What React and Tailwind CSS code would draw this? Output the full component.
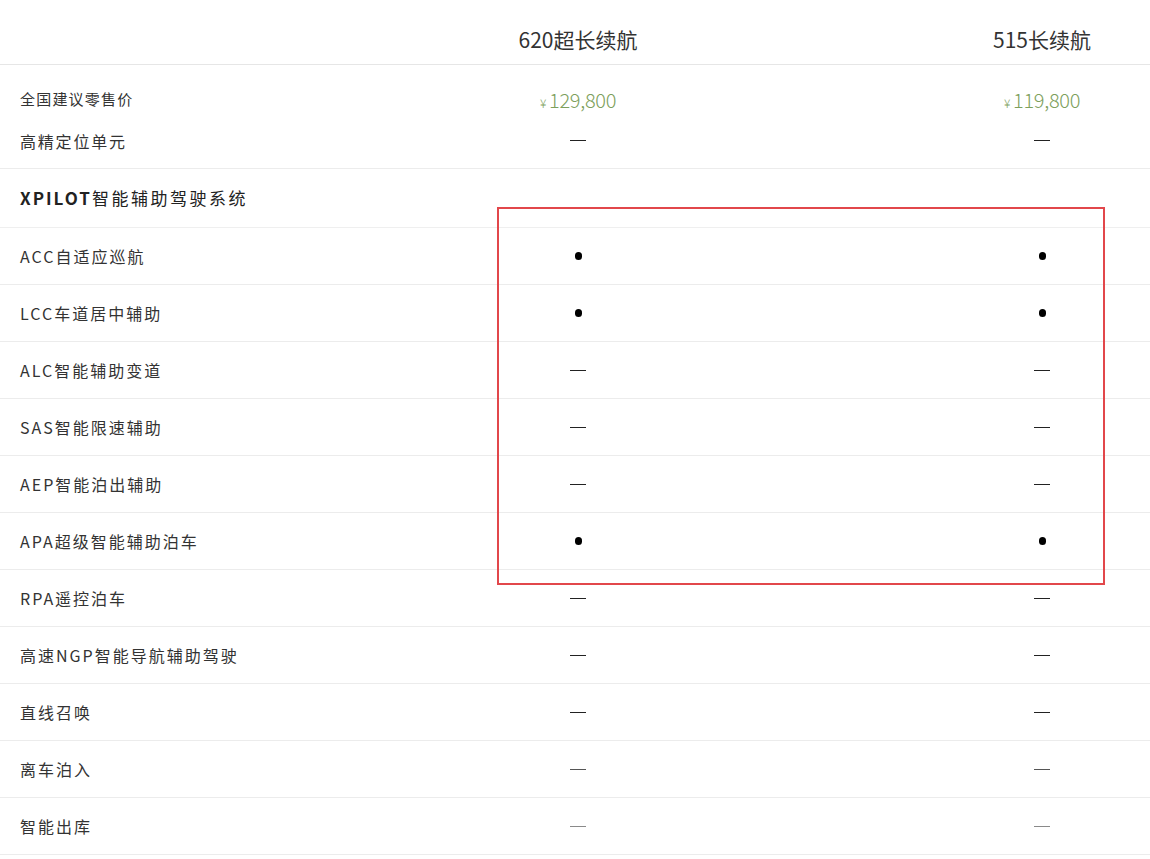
import React from "react";

const font = { fontFamily: '"Noto Sans CJK SC", "Noto Sans", sans-serif' };

const features = [
    { name: "ACC自适应巡航", a: "dot", b: "dot" },
    { name: "LCC车道居中辅助", a: "dot", b: "dot" },
    { name: "ALC智能辅助变道", a: "dash", b: "dash" },
    { name: "SAS智能限速辅助", a: "dash", b: "dash" },
    { name: "AEP智能泊出辅助", a: "dash", b: "dash" },
    { name: "APA超级智能辅助泊车", a: "dot", b: "dot" },
    { name: "RPA遥控泊车", a: "dash", b: "dash" },
    { name: "高速NGP智能导航辅助驾驶", a: "dash", b: "dash" },
    { name: "直线召唤", a: "dash", b: "dash" },
    { name: "离车泊入", a: "dash", b: "dash", tone: "light" },
    { name: "智能出库", a: "dash", b: "dash", tone: "lighter" },
];

function Mark({ type, tone }) {
    if (type === "dot") {
        return <div className="w-[7px] h-[8px] rounded-full bg-black" />;
    }
    const color =
        tone === "lighter"
            ? "bg-[#8a8a8a]"
            : tone === "light"
            ? "bg-[#555]"
            : "bg-[#222]";
    return <div className={`w-[16px] h-px ${color}`} />;
}

function Price({ value }) {
    return (
        <span className="text-[#7d9f5c] text-[20px] leading-none font-light tracking-[-0.3px]">
            <span className="text-[12px] mr-[3px]">¥</span>
            {value}
        </span>
    );
}

export default function App() {
    return (
        <div className="w-[1150px] h-[859px] bg-white relative" style={font}>
            {/* header */}
            <div className="grid grid-cols-[222px_712px_216px] h-[65px] border-b border-[#e6e6e6] items-center text-[21px] text-[#333]">
                <div />
                <div className="text-center pt-[16px]">620超长续航</div>
                <div className="text-center pt-[16px]">515长续航</div>
            </div>

            {/* price block */}
            <div className="pt-[14px] pb-[7px] border-b border-[#ececec]">
                <div className="grid grid-cols-[222px_712px_216px] h-[41px] items-center">
                    <div className="pl-5 text-[15px] tracking-[1.2px] text-[#333]">全国建议零售价</div>
                    <div className="flex justify-center"><Price value="129,800" /></div>
                    <div className="flex justify-center"><Price value="119,800" /></div>
                </div>
                <div className="grid grid-cols-[222px_712px_216px] h-[41px] items-center">
                    <div className="pl-5 text-[16px] tracking-[1.8px] text-[#333]">高精定位单元</div>
                    <div className="flex justify-center"><Mark type="dash" /></div>
                    <div className="flex justify-center"><Mark type="dash" /></div>
                </div>
            </div>

            {/* section title */}
            <div className="h-[59px] flex items-center pl-5 border-b border-[#efefef] text-[17px] text-[#222]">
                <span className="font-bold tracking-[2px]">XPILOT</span>
                <span className="tracking-[2.5px]">智能辅助驾驶系统</span>
            </div>

            {/* feature rows */}
            {features.map((f) => (
                <div
                    key={f.name}
                    className="grid grid-cols-[222px_712px_216px] h-[57px] items-center border-b border-[#ececec]"
                >
                    <div className="pl-5 text-[16px] tracking-[2px] text-[#333] whitespace-nowrap">{f.name}</div>
                    <div className="flex justify-center"><Mark type={f.a} tone={f.tone} /></div>
                    <div className="flex justify-center"><Mark type={f.b} tone={f.tone} /></div>
                </div>
            ))}

            {/* highlight box */}
            <div className="absolute left-[497px] top-[207px] w-[608px] h-[378px] border-2 border-[#e2474b] pointer-events-none" />
        </div>
    );
}
